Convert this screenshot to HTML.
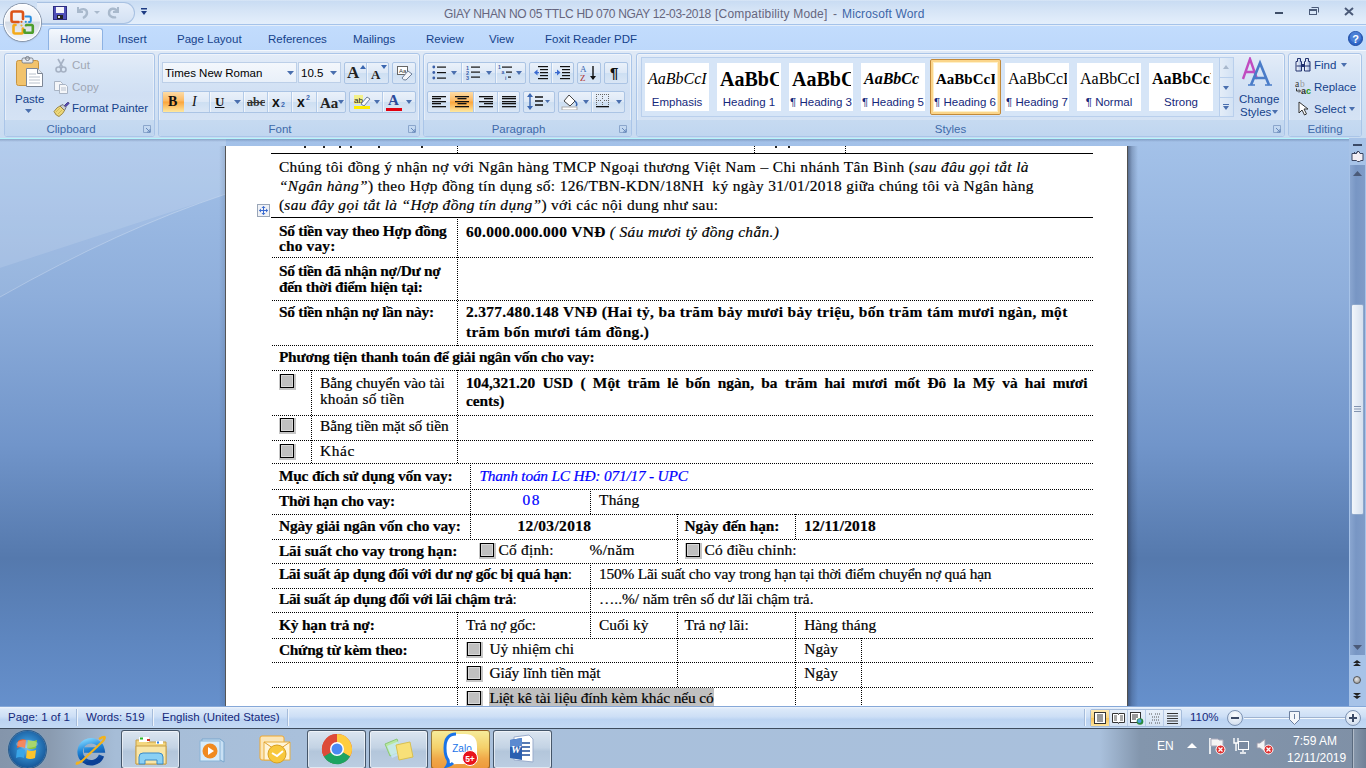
<!DOCTYPE html>
<html><head><meta charset="utf-8">
<style>
*{margin:0;padding:0;box-sizing:border-box}
html,body{width:1366px;height:768px;overflow:hidden;background:#fff}
body{position:relative;font-family:"Liberation Sans",sans-serif;font-size:11.5px;color:#15428b}
.a{position:absolute}
.nw{white-space:nowrap}
/* title bar */
#title{left:0;top:0;width:1366px;height:25px;background:linear-gradient(#e0ebf8 0px,#c9dcf3 1px,#d5e4f6 10px,#e3eefb 23px);border-bottom:1px solid #a5c3ea}
#tabs{left:0;top:25px;width:1366px;height:25px;background:linear-gradient(#c2dcfd,#bdd8fb);border-top:1px solid #e4eefa}
#ribbon{left:0;top:50px;width:1366px;height:88px;background:linear-gradient(#dfe9f6,#d3e2f4 50%,#c8dbf1);border-top:1px solid #f2f7fd}
.grp{position:absolute;top:2px;height:84px;border:1px solid #aac5e8;box-shadow:inset 0 0 0 1px rgba(255,255,255,.45);border-radius:3px;background:linear-gradient(#e3ecf8 0%,#d6e4f5 28%,#d0dff3 50%,#d8e5f5 100%)}
.glab{position:absolute;left:0;right:0;bottom:0;height:16px;background:linear-gradient(#c6daf1,#c0d6f0);color:#3e6aaa;text-align:center;line-height:18px;border-radius:0 0 2px 2px}
.bg{position:absolute;border:1px solid #abc4e4;border-radius:2px;background:linear-gradient(#eaf1fa,#dde8f6 50%,#cddff2 51%,#dae6f5)}
.dv{position:absolute;width:1px;background:#b3cbe9;box-shadow:1px 0 0 rgba(255,255,255,.6)}
.hl{position:absolute;background:linear-gradient(#fddca6,#fcb860 45%,#fba53c 50%,#fde8a0)}
.dh{position:absolute;height:1px;background:repeating-linear-gradient(90deg,#000 0 1px,transparent 1px 2px)}
.dvv{position:absolute;width:1px;background:repeating-linear-gradient(180deg,#000 0 1px,transparent 1px 2px)}
.cb{position:absolute;width:17px;height:16px;background:#c6c6c6}
.cb::after{content:"";position:absolute;left:1px;top:0;width:12px;height:12px;border:1px solid #000;background:#c0c0c0;box-shadow:inset 0 0 0 1px #d8d8d8}
#doc{left:0;top:138px;width:1349px;height:568px;background:linear-gradient(#a4c2e9 0%,#8eaedb 28%,#7195ca 54%,#5579ad 74%,#5e86bf 88%,#6690cc 100%);overflow:hidden}
#page{left:226px;top:8px;width:901px;height:600px;background:#fff}
#vscroll{left:1349px;top:138px;width:17px;height:568px;background:#a7c3e8}
#status{left:0;top:706px;width:1366px;height:22px;background:linear-gradient(#eef4fc 0px,#dce9f9 2px,#cddff6 45%,#bcd4f2 60%,#c3d9f4 100%);border-top:1px solid #86a8d8}
#taskbar{left:0;top:728px;width:1366px;height:40px;background:linear-gradient(90deg,#8495ab 0px,#8a9bb0 50px,#a6bdd7 115px,#a9c0db 300px,#a9c0dc 1100px,#8396ad 1140px,#7f90a6 1366px);border-top:1px solid #3e4c5e}
</style></head><body>
<div id="title" class="a">
  <div class="a" style="left:37px;top:2px;width:98px;height:22px;border:1px solid #a8c1e2;border-left:none;border-radius:0 11px 11px 0;background:linear-gradient(#e6eefa,#d3e1f3)"></div>
  <svg class="a" style="left:52px;top:5px" width="16" height="16" viewBox="0 0 16 16"><rect x="1" y="1" width="14" height="14" rx="1" fill="#4f4fb8"/><rect x="1.5" y="1.5" width="13" height="13" fill="none" stroke="#2c2c80"/><rect x="4" y="2" width="8" height="6" fill="#f4f4fa"/><rect x="5" y="10" width="6" height="4" fill="#222"/><rect x="6" y="11" width="2" height="2" fill="#ddd"/></svg>
  <svg class="a" style="left:75px;top:5px" width="14" height="14" viewBox="0 0 14 14"><path d="M3 2 v5 h5" fill="none" stroke="#a9b9cc" stroke-width="2"/><path d="M3 7 C6 3 12 3 12 8 C12 11 10 12 8 13" fill="none" stroke="#a9b9cc" stroke-width="2.4"/></svg>
  <svg class="a" style="left:94px;top:11px" width="6" height="4"><path d="M0 0h6l-3 3z" fill="#a9b9cc"/></svg>
  <svg class="a" style="left:107px;top:5px" width="14" height="14" viewBox="0 0 14 14"><path d="M11 2 v5 h-5" fill="none" stroke="#a9b9cc" stroke-width="2"/><path d="M11 7 C8 2 2 3 2 8 C2 12 7 13 9 12" fill="none" stroke="#a9b9cc" stroke-width="2.4"/></svg>
  <svg class="a" style="left:141px;top:8px" width="6" height="8"><rect x="0" y="0" width="6" height="1.5" fill="#1d3b83"/><path d="M0 3h6l-3 4z" fill="#1d3b83"/></svg>
  <div class="a nw" style="left:444px;top:6px;font-size:12px;line-height:16px;color:#66667e;letter-spacing:-0.33px">GIAY NHAN NO 05 TTLC HD 070 NGAY 12-03-2018</div>
  <div class="a nw" style="left:715px;top:6px;font-size:12px;line-height:16px;color:#66667e;letter-spacing:0.19px">[Compatibility Mode]</div>
  <div class="a nw" style="left:833px;top:6px;font-size:12px;line-height:16px;color:#66667e">-</div>
  <div class="a nw" style="left:842px;top:6px;font-size:12px;line-height:16px;color:#3d66a8;letter-spacing:0.15px">Microsoft Word</div>
  <div class="a" style="left:1275px;top:12px;width:8px;height:2px;background:#3e4e68"></div>
  <svg class="a" style="left:1309px;top:7px" width="10" height="8"><rect x="0.5" y="2.5" width="7" height="5" fill="none" stroke="#4a5a78"/><rect x="0" y="2" width="8" height="2" fill="#4a5a78"/><path d="M2.5 0.5h7v5" fill="none" stroke="#4a5a78"/></svg>
  <svg class="a" style="left:1344px;top:7px" width="10" height="9"><path d="M1 1L9 8M9 1L1 8" stroke="#4a5a78" stroke-width="2"/></svg>
</div>
<div class="a" style="z-index:10;left:4px;top:4px;width:37px;height:37px;border-radius:50%;background:linear-gradient(#fdfdfe 0%,#eef1f6 45%,#d3dbe6 50%,#e4e9f0 75%,#f6f8fb 100%);box-shadow:0 0 0 1px #8a98ac,inset 0 0 0 1px #fff,0 1px 2px rgba(0,0,0,.25)">
  <svg class="a" style="left:0;top:0" width="37" height="37" viewBox="4 4 37 37"><g fill="none" stroke-linecap="round"><path d="M23 19V13.5Q23 11.5 21 11.5H13.5Q11.5 11.5 11.5 13.5V20Q11.5 22 13.5 22H18.5" stroke="#dc5418" stroke-width="2.6"/><path d="M25.5 16.5H29.5Q30.8 16.5 30.8 17.8V20.8Q30.8 22 29.5 22H29" stroke="#2b8ee0" stroke-width="2"/><path d="M15.5 25H14.8Q13.5 25 13.5 26.3V32Q13.5 33.5 15 33.5H21.5Q22.8 33.5 22.8 32V28.5" stroke="#f4aa1a" stroke-width="2.6"/><path d="M26.5 25H31.5Q32.8 25 32.8 26.3V31.5Q32.8 32.8 31.5 32.8H25.8Q24.5 32.8 24.5 31.5V30" stroke="#4e9e2c" stroke-width="2.6"/></g><circle cx="21.5" cy="21.8" r="1.1" fill="#e0601a"/><circle cx="25.8" cy="21.8" r="1.1" fill="#2b8ee0"/><circle cx="21.5" cy="25.5" r="1.1" fill="#f4b030"/><circle cx="25.8" cy="25.5" r="1.1" fill="#4e9e2c"/></svg>
</div>
<div id="tabs" class="a">
  <div class="a" style="left:48px;top:2px;width:55px;height:24px;border:1px solid #8db2e3;border-bottom:none;border-radius:3px 3px 0 0;background:linear-gradient(#f4f8fd,#e4ecf7 60%,#dfe8f5)"></div>
  <div class="a nw" style="left:60px;top:6px;line-height:14px">Home</div>
  <div class="a nw" style="left:118px;top:6px;line-height:14px">Insert</div>
  <div class="a nw" style="left:177px;top:6px;line-height:14px">Page Layout</div>
  <div class="a nw" style="left:268px;top:6px;line-height:14px">References</div>
  <div class="a nw" style="left:353px;top:6px;line-height:14px">Mailings</div>
  <div class="a nw" style="left:426px;top:6px;line-height:14px">Review</div>
  <div class="a nw" style="left:489px;top:6px;line-height:14px">View</div>
  <div class="a nw" style="left:545px;top:6px;line-height:14px">Foxit Reader PDF</div>
  <svg class="a" style="left:1348px;top:5px" width="15" height="15" viewBox="0 0 15 15"><circle cx="7.5" cy="7.5" r="7" fill="#2f66c8" stroke="#1d4aa0"/><circle cx="7.5" cy="6" r="5.5" fill="#5d8fe0" opacity=".6"/><text x="7.5" y="11.5" font-family="Liberation Sans" font-weight="bold" font-size="11" text-anchor="middle" fill="#fff">?</text></svg>
</div>
<div id="ribbon" class="a">
  <div class="grp" style="left:4px;width:151px"><div class="glab" style="padding-right:17px">Clipboard</div></div>
  <div class="grp" style="left:158px;width:262px"><div class="glab" style="padding-right:18px">Font</div></div>
  <div class="grp" style="left:423px;width:209px"><div class="glab" style="padding-right:18px">Paragraph</div></div>
  <div class="grp" style="left:636px;width:649px"><div class="glab" style="padding-right:20px">Styles</div></div>
  <div class="grp" style="left:1288px;width:74px"><div class="glab">Editing</div></div>
</div>
<!-- RIBBON ITEMS -->
<div class="a" style="left:0;top:0;width:1366px;height:138px;z-index:5">
<!-- Clipboard -->
<svg class="a" style="left:15px;top:56px" width="30" height="32" viewBox="0 0 30 32"><rect x="1.5" y="4.5" width="22" height="25" rx="2" fill="#f2c36c" stroke="#c89440"/><rect x="7" y="2" width="11" height="5" rx="1.5" fill="#e4e8ee" stroke="#7a808a"/><circle cx="12.5" cy="2.5" r="2" fill="none" stroke="#7a808a"/><path d="M11.5 12.5h11l5 5v13h-16z" fill="#fff" stroke="#7d8796"/><path d="M22.5 12.5v5h5" fill="#e6eaf0" stroke="#7d8796"/><path d="M14 18h7M14 21h11M14 24h11M14 27h11" stroke="#b9c1cc"/></svg>
<div class="a nw" style="left:15px;top:92px;line-height:14px">Paste</div>
<svg class="a" style="left:25px;top:109px" width="7" height="4"><path d="M0 0h7l-3.5 4z" fill="#4a6fae"/></svg>
<svg class="a" style="left:55px;top:58px" width="12" height="15" viewBox="0 0 12 15"><path d="M3 1l4.5 8M9 1L4.5 9" stroke="#a6b2c4" stroke-width="1.6"/><circle cx="3.5" cy="11.5" r="2.5" fill="none" stroke="#a6b2c4" stroke-width="1.6"/><circle cx="8.5" cy="11.5" r="2.5" fill="none" stroke="#a6b2c4" stroke-width="1.6"/></svg>
<div class="a nw" style="left:72px;top:58px;line-height:14px;color:#a0a7b4">Cut</div>
<svg class="a" style="left:53px;top:80px" width="16" height="14" viewBox="0 0 16 14"><path d="M1.5 1.5h6l2 2v7h-8z" fill="#f4f6f9" stroke="#a9b4c4"/><path d="M6.5 4.5h6l2 2v7h-8z" fill="#f4f6f9" stroke="#a9b4c4"/><path d="M8 8h5M8 10h5" stroke="#b9c2d0"/></svg>
<div class="a nw" style="left:72px;top:80px;line-height:14px;color:#a0a7b4">Copy</div>
<svg class="a" style="left:53px;top:101px" width="17" height="16" viewBox="0 0 17 16"><path d="M10.5 5.5 L14.5 1.5 Q16 1 16 2.5 L12 6.5z" fill="#5a4ab8" stroke="#2e2670" stroke-width=".8"/><path d="M7 5 L10 3.5 L13 6.5 L11.5 9.5z" fill="#c8ccd4" stroke="#5a5e68" stroke-width=".8"/><path d="M1 10.5 Q4 6 7 5 L11.5 9.5 Q10.5 12.5 6 15.5 Q3 15 1 10.5z" fill="#ecd77a" stroke="#8a7430" stroke-width=".8"/><path d="M3 11l4-4M5 13l4-4" stroke="#c9ae48" stroke-width=".7"/></svg>
<div class="a nw" style="left:72px;top:101px;line-height:14px">Format Painter</div>
<svg class="a" style="left:143px;top:125px" width="8" height="8"><path d="M0.5 0.5h7v7h-7z" fill="none" stroke="#8ba6cc"/><path d="M3 3l4 4M7 4v3h-3" stroke="#6688bb" fill="none"/></svg>
<!-- Font -->
<div class="a" style="left:162px;top:62px;width:135px;height:21px;border:1px solid #bccfe8;background:linear-gradient(#f3f7fc,#e9f0f9)"></div>
<div class="a nw" style="left:165px;top:66px;line-height:14px;color:#000">Times New Roman</div>
<svg class="a" style="left:287px;top:71px" width="7" height="4"><path d="M0 0h7l-3.5 4z" fill="#4a6fae"/></svg>
<div class="a" style="left:298px;top:62px;width:43px;height:21px;border:1px solid #bccfe8;background:linear-gradient(#f3f7fc,#e9f0f9)"></div>
<div class="a nw" style="left:301px;top:66px;line-height:14px;color:#000">10.5</div>
<svg class="a" style="left:330px;top:71px" width="7" height="4"><path d="M0 0h7l-3.5 4z" fill="#4a6fae"/></svg>
<div class="a bg" style="left:344px;top:62px;width:45px;height:22px"></div>
<div class="a dv" style="left:366px;top:63px;height:20px"></div>
<div class="a nw" style="left:347px;top:63px;font:bold 17px 'Liberation Serif';line-height:20px;color:#222">A</div>
<svg class="a" style="left:360px;top:65px" width="6" height="4"><path d="M0 4h6l-3-4z" fill="#3a66b0"/></svg>
<div class="a nw" style="left:371px;top:67px;font:bold 13px 'Liberation Serif';line-height:16px;color:#222">A</div>
<svg class="a" style="left:381px;top:65px" width="6" height="4"><path d="M0 0h6l-3 4z" fill="#3a66b0"/></svg>
<div class="a bg" style="left:392px;top:62px;width:24px;height:22px"></div>
<svg class="a" style="left:396px;top:65px" width="17" height="16" viewBox="0 0 17 16"><rect x="1.5" y="1.5" width="10" height="8" fill="#fff" stroke="#666"/><text x="3" y="8" font-family="Liberation Sans" font-size="6" fill="#333">Aa</text><path d="M6 13 L12 6 L16 9 L10 15 Q7 15.5 6 13z" fill="#f4f6fb" stroke="#6d7f9a"/></svg>
<div class="a bg" style="left:162px;top:91px;width:184px;height:22px"></div>
<div class="a hl" style="left:163px;top:92px;width:21px;height:20px"></div>
<div class="a dv" style="left:209px;top:92px;height:20px"></div>
<div class="a dv" style="left:243px;top:92px;height:20px"></div>
<div class="a dv" style="left:267px;top:92px;height:20px"></div>
<div class="a dv" style="left:291px;top:92px;height:20px"></div>
<div class="a dv" style="left:316px;top:92px;height:20px"></div>
<div class="a nw" style="left:168px;top:93px;font:bold 14px 'Liberation Serif';line-height:18px;color:#111">B</div>
<div class="a nw" style="left:192px;top:93px;font:italic 14px 'Liberation Serif';line-height:18px;color:#111">I</div>
<div class="a nw" style="left:215px;top:93px;font:bold 13px 'Liberation Serif';line-height:18px;color:#111;text-decoration:underline">U</div>
<svg class="a" style="left:234px;top:100px" width="7" height="4"><path d="M0 0h7l-3.5 4z" fill="#4a6fae"/></svg>
<div class="a nw" style="left:247px;top:94px;font:bold 12px 'Liberation Serif';line-height:16px;color:#333;text-decoration:line-through">abc</div>
<div class="a nw" style="left:272px;top:93px;font:bold 14px 'Liberation Sans';line-height:18px;color:#111">x</div>
<div class="a nw" style="left:281px;top:101px;font:bold 7px 'Liberation Sans';line-height:8px;color:#3a66b0">2</div>
<div class="a nw" style="left:297px;top:93px;font:bold 14px 'Liberation Sans';line-height:18px;color:#111">x</div>
<div class="a nw" style="left:306px;top:94px;font:bold 7px 'Liberation Sans';line-height:8px;color:#3a66b0">2</div>
<div class="a nw" style="left:320px;top:94px;font:bold 15px 'Liberation Serif';line-height:18px;color:#222">Aa</div>
<svg class="a" style="left:338px;top:100px" width="6" height="4"><path d="M0 0h6l-3 4z" fill="#4a6fae"/></svg>
<div class="a bg" style="left:349px;top:91px;width:67px;height:22px"></div>
<div class="a dv" style="left:382px;top:92px;height:20px"></div>
<svg class="a" style="left:353px;top:93px" width="18" height="17" viewBox="0 0 18 17"><rect x="1" y="2" width="9" height="9" fill="#f3f08a"/><text x="1" y="10" font-family="Liberation Sans" font-size="8" fill="#222">ab</text><path d="M8 11 L14 4 L17 6 L11 13z" fill="#f8fafc" stroke="#6d7f9a"/><rect x="1" y="13" width="16" height="3" fill="#ffec00"/></svg>
<svg class="a" style="left:374px;top:100px" width="6" height="4"><path d="M0 0h6l-3 4z" fill="#4a6fae"/></svg>
<div class="a nw" style="left:388px;top:92px;font:bold 15px 'Liberation Serif';line-height:16px;color:#2a4a9a">A</div>
<div class="a" style="left:386px;top:108px;width:16px;height:3px;background:#e00010"></div>
<svg class="a" style="left:406px;top:100px" width="6" height="4"><path d="M0 0h6l-3 4z" fill="#4a6fae"/></svg>
<svg class="a" style="left:408px;top:125px" width="8" height="8"><path d="M0.5 0.5h7v7h-7z" fill="none" stroke="#8ba6cc"/><path d="M3 3l4 4M7 4v3h-3" stroke="#6688bb" fill="none"/></svg>
<!-- Paragraph -->
<div class="a bg" style="left:427px;top:62px;width:99px;height:22px"></div>
<div class="a dv" style="left:461px;top:63px;height:20px"></div>
<div class="a dv" style="left:495px;top:63px;height:20px"></div>
<svg class="a" style="left:432px;top:65px" width="16" height="15" viewBox="0 0 16 15"><circle cx="1.8" cy="2" r="1.4" fill="#3a5fa8"/><circle cx="1.8" cy="7.5" r="1.4" fill="#3a5fa8"/><circle cx="1.8" cy="13" r="1.4" fill="#3a5fa8"/><rect x="5" y="1.5" width="9" height="1.2" fill="#111"/><rect x="5" y="7" width="9" height="1.2" fill="#111"/><rect x="5" y="12.5" width="9" height="1.2" fill="#111"/></svg>
<svg class="a" style="left:451px;top:71px" width="6" height="4"><path d="M0 0h6l-3 4z" fill="#4a6fae"/></svg>
<svg class="a" style="left:466px;top:64px" width="16" height="16" viewBox="0 0 16 16"><text x="0" y="5.5" font-family="Liberation Sans" font-weight="bold" font-size="5.5" fill="#3a5fa8">1</text><text x="0" y="10.5" font-family="Liberation Sans" font-weight="bold" font-size="5.5" fill="#3a5fa8">2</text><text x="0" y="15.5" font-family="Liberation Sans" font-weight="bold" font-size="5.5" fill="#3a5fa8">3</text><rect x="5" y="2.5" width="9" height="1.2" fill="#111"/><rect x="5" y="7.5" width="9" height="1.2" fill="#111"/><rect x="5" y="12.5" width="9" height="1.2" fill="#111"/></svg>
<svg class="a" style="left:486px;top:71px" width="6" height="4"><path d="M0 0h6l-3 4z" fill="#4a6fae"/></svg>
<svg class="a" style="left:498px;top:64px" width="16" height="16" viewBox="0 0 16 16"><text x="0" y="5" font-family="Liberation Sans" font-weight="bold" font-size="5" fill="#3a5fa8">1</text><text x="3.5" y="10" font-family="Liberation Sans" font-weight="bold" font-size="5" fill="#3a5fa8">a</text><text x="7" y="15.5" font-family="Liberation Sans" font-weight="bold" font-size="5" fill="#3a5fa8">i</text><rect x="4" y="2.5" width="10" height="1.2" fill="#111"/><rect x="8" y="7.5" width="6" height="1.2" fill="#111"/><rect x="10" y="12.5" width="3" height="1.2" fill="#111"/></svg>
<svg class="a" style="left:516px;top:71px" width="6" height="4"><path d="M0 0h6l-3 4z" fill="#4a6fae"/></svg>
<div class="a bg" style="left:529px;top:62px;width:45px;height:22px"></div>
<div class="a dv" style="left:551px;top:63px;height:20px"></div>
<svg class="a" style="left:533px;top:65px" width="16" height="15" viewBox="0 0 16 15"><rect x="5" y="1" width="10" height="1.2" fill="#111"/><rect x="7" y="4" width="8" height="1.2" fill="#111"/><rect x="7" y="7" width="8" height="1.2" fill="#111"/><rect x="7" y="10" width="8" height="1.2" fill="#111"/><rect x="5" y="13" width="10" height="1.2" fill="#111"/><path d="M1 7.5l3.5-3v6z" fill="#3a6ad0"/><rect x="3" y="7" width="3" height="1.2" fill="#3a6ad0"/></svg>
<svg class="a" style="left:555px;top:65px" width="16" height="15" viewBox="0 0 16 15"><rect x="5" y="1" width="10" height="1.2" fill="#111"/><rect x="7" y="4" width="8" height="1.2" fill="#111"/><rect x="7" y="7" width="8" height="1.2" fill="#111"/><rect x="7" y="10" width="8" height="1.2" fill="#111"/><rect x="5" y="13" width="10" height="1.2" fill="#111"/><path d="M5.5 7.5l-3.5-3v6z" fill="#3a6ad0"/><rect x="0" y="7" width="3" height="1.2" fill="#3a6ad0"/></svg>
<div class="a bg" style="left:577px;top:62px;width:24px;height:22px"></div>
<svg class="a" style="left:580px;top:64px" width="18" height="18" viewBox="0 0 18 18"><text x="0" y="8" font-family="Liberation Serif" font-size="9" fill="#3a66b0">A</text><text x="0" y="17" font-family="Liberation Serif" font-size="9" fill="#b03030">Z</text><path d="M13 2v13" stroke="#111" stroke-width="1.4"/><path d="M10 12l3 4 3-4z" fill="#111"/></svg>
<div class="a bg" style="left:604px;top:62px;width:24px;height:22px"></div>
<div class="a nw" style="left:610px;top:64px;font:bold 15px 'Liberation Sans';line-height:18px;color:#111">¶</div>
<div class="a bg" style="left:427px;top:91px;width:93px;height:22px"></div>
<div class="a hl" style="left:450px;top:92px;width:23px;height:20px"></div>
<div class="a dv" style="left:473px;top:92px;height:20px"></div>
<div class="a dv" style="left:497px;top:92px;height:20px"></div>
<svg class="a" style="left:432px;top:96px" width="15" height="12"><rect x="0" y="0" width="14" height="1.3" fill="#111"/><rect x="0" y="2" width="9" height="1.3" fill="#111"/><rect x="0" y="5" width="14" height="1.3" fill="#111"/><rect x="0" y="7" width="9" height="1.3" fill="#111"/><rect x="0" y="10" width="14" height="1.3" fill="#111"/></svg>
<svg class="a" style="left:455px;top:96px" width="15" height="12"><rect x="0" y="0" width="14" height="1.3" fill="#111"/><rect x="2.5" y="2" width="9" height="1.3" fill="#111"/><rect x="0" y="5" width="14" height="1.3" fill="#111"/><rect x="2.5" y="7" width="9" height="1.3" fill="#111"/><rect x="0" y="10" width="14" height="1.3" fill="#111"/></svg>
<svg class="a" style="left:479px;top:96px" width="15" height="12"><rect x="0" y="0" width="14" height="1.3" fill="#111"/><rect x="5" y="2" width="9" height="1.3" fill="#111"/><rect x="0" y="5" width="14" height="1.3" fill="#111"/><rect x="5" y="7" width="9" height="1.3" fill="#111"/><rect x="0" y="10" width="14" height="1.3" fill="#111"/></svg>
<svg class="a" style="left:502px;top:96px" width="15" height="12"><rect x="0" y="0" width="14" height="1.3" fill="#111"/><rect x="0" y="2" width="14" height="1.3" fill="#111"/><rect x="0" y="5" width="14" height="1.3" fill="#111"/><rect x="0" y="7" width="14" height="1.3" fill="#111"/><rect x="0" y="10" width="14" height="1.3" fill="#111"/></svg>
<div class="a bg" style="left:523px;top:91px;width:32px;height:22px"></div>
<svg class="a" style="left:527px;top:93px" width="24" height="17" viewBox="0 0 24 17"><path d="M3 2v13" stroke="#3a66b0" stroke-width="1.4"/><path d="M0 4l3-4 3 4zM0 13l3 4 3-4z" fill="#3a66b0"/><path d="M8 4h8M8 8h8M8 12h8" stroke="#111" stroke-width="1.3"/><path d="M18 7h5l-2.5 3z" fill="#4a6fae"/></svg>
<div class="a bg" style="left:558px;top:91px;width:67px;height:22px"></div>
<div class="a dv" style="left:591px;top:92px;height:20px"></div>
<svg class="a" style="left:561px;top:93px" width="18" height="17" viewBox="0 0 18 17"><path d="M3 8 L8 2 L14 8 L9 13z" fill="#fff" stroke="#444"/><path d="M14 8 q3 3 1 5" fill="none" stroke="#3a66b0" stroke-width="1.5"/><rect x="1" y="14" width="15" height="3" fill="#fff" stroke="#aaa"/></svg>
<svg class="a" style="left:583px;top:100px" width="6" height="4"><path d="M0 0h6l-3 4z" fill="#4a6fae"/></svg>
<svg class="a" style="left:596px;top:94px" width="14" height="14" viewBox="0 0 14 14"><g fill="#666"><rect x="0" y="0" width="1" height="1"/><rect x="2" y="0" width="1" height="1"/><rect x="4" y="0" width="1" height="1"/><rect x="6" y="0" width="1" height="1"/><rect x="8" y="0" width="1" height="1"/><rect x="10" y="0" width="1" height="1"/><rect x="12" y="0" width="1" height="1"/><rect x="0" y="2" width="1" height="1"/><rect x="0" y="4" width="1" height="1"/><rect x="0" y="6" width="1" height="1"/><rect x="0" y="8" width="1" height="1"/><rect x="0" y="10" width="1" height="1"/><rect x="12" y="2" width="1" height="1"/><rect x="12" y="4" width="1" height="1"/><rect x="12" y="6" width="1" height="1"/><rect x="12" y="8" width="1" height="1"/><rect x="12" y="10" width="1" height="1"/><rect x="6" y="2" width="1" height="1"/><rect x="6" y="4" width="1" height="1"/><rect x="6" y="8" width="1" height="1"/><rect x="6" y="10" width="1" height="1"/><rect x="2" y="6" width="1" height="1"/><rect x="4" y="6" width="1" height="1"/><rect x="8" y="6" width="1" height="1"/><rect x="10" y="6" width="1" height="1"/></g><rect x="0" y="12" width="13" height="1.3" fill="#111"/></svg>
<svg class="a" style="left:616px;top:100px" width="6" height="4"><path d="M0 0h6l-3 4z" fill="#4a6fae"/></svg>
<svg class="a" style="left:619px;top:125px" width="8" height="8"><path d="M0.5 0.5h7v7h-7z" fill="none" stroke="#8ba6cc"/><path d="M3 3l4 4M7 4v3h-3" stroke="#6688bb" fill="none"/></svg>
<!-- Styles -->
<div class="a" style="left:641px;top:57px;width:593px;height:60px;border:1px solid #b9cfec;background:#d6e5f7"></div>
<div class="a" style="left:645px;top:63px;width:64px;height:48px;background:#fff"></div>
<div class="a nw" style="left:645px;top:68px;width:62px;height:24px;overflow:hidden;padding-left:3px;font:italic 16px 'Liberation Serif';line-height:22px;color:#000">AaBbCcI</div>
<div class="a nw" style="left:645px;top:95px;width:64px;text-align:center;line-height:14px;color:#15287b">Emphasis</div>
<div class="a" style="left:717px;top:63px;width:64px;height:48px;background:#fff"></div>
<div class="a nw" style="left:717px;top:68px;width:62px;height:24px;overflow:hidden;padding-left:3px;font:bold 20px 'Liberation Serif';line-height:22px;color:#000">AaBbC</div>
<div class="a nw" style="left:717px;top:95px;width:64px;text-align:center;line-height:14px;color:#15287b">Heading 1</div>
<div class="a" style="left:789px;top:63px;width:64px;height:48px;background:#fff"></div>
<div class="a nw" style="left:789px;top:68px;width:62px;height:24px;overflow:hidden;padding-left:3px;font:bold 20px 'Liberation Serif';line-height:22px;color:#000">AaBbC</div>
<div class="a nw" style="left:789px;top:95px;width:64px;text-align:center;line-height:14px;color:#15287b">¶ Heading 3</div>
<div class="a" style="left:861px;top:63px;width:64px;height:48px;background:#fff"></div>
<div class="a nw" style="left:861px;top:68px;width:62px;height:24px;overflow:hidden;padding-left:3px;font:bold italic 16px 'Liberation Serif';line-height:22px;color:#000">AaBbCc</div>
<div class="a nw" style="left:861px;top:95px;width:64px;text-align:center;line-height:14px;color:#15287b">¶ Heading 5</div>
<div class="a" style="left:930px;top:59px;width:71px;height:56px;border:1px solid #c2893a;border-radius:2px;background:#fff;box-shadow:inset 0 0 0 2px #fbd58a,inset 0 0 0 3px #fef0c8"></div>
<div class="a nw" style="left:933px;top:68px;width:62px;height:24px;overflow:hidden;padding-left:3px;font:bold 15px 'Liberation Serif';line-height:22px;color:#000">AaBbCcI</div>
<div class="a nw" style="left:933px;top:95px;width:64px;text-align:center;line-height:14px;color:#15287b">¶ Heading 6</div>
<div class="a" style="left:1005px;top:63px;width:64px;height:48px;background:#fff"></div>
<div class="a nw" style="left:1005px;top:68px;width:62px;height:24px;overflow:hidden;padding-left:3px;font:16px 'Liberation Serif';line-height:22px;color:#000">AaBbCcI</div>
<div class="a nw" style="left:1005px;top:95px;width:64px;text-align:center;line-height:14px;color:#15287b">¶ Heading 7</div>
<div class="a" style="left:1077px;top:63px;width:64px;height:48px;background:#fff"></div>
<div class="a nw" style="left:1077px;top:68px;width:62px;height:24px;overflow:hidden;padding-left:3px;font:16px 'Liberation Serif';line-height:22px;color:#000">AaBbCcI</div>
<div class="a nw" style="left:1077px;top:95px;width:64px;text-align:center;line-height:14px;color:#15287b">¶ Normal</div>
<div class="a" style="left:1149px;top:63px;width:64px;height:48px;background:#fff"></div>
<div class="a nw" style="left:1149px;top:68px;width:62px;height:24px;overflow:hidden;padding-left:3px;font:bold 16px 'Liberation Serif';line-height:22px;color:#000">AaBbCcI</div>
<div class="a nw" style="left:1149px;top:95px;width:64px;text-align:center;line-height:14px;color:#15287b">Strong</div>
<div class="a" style="left:1219px;top:57px;width:15px;height:60px;border:1px solid #b9cfec;background:linear-gradient(90deg,#e4edf8,#d3e2f4)"></div>
<div class="a" style="left:1219px;top:77px;width:15px;height:1px;background:#b9cfec"></div>
<div class="a" style="left:1219px;top:97px;width:15px;height:1px;background:#b9cfec"></div>
<svg class="a" style="left:1223px;top:65px" width="6" height="4"><path d="M0 4h6l-3-4z" fill="#a8b8cc"/></svg>
<svg class="a" style="left:1223px;top:86px" width="6" height="4"><path d="M0 0h6l-3 4z" fill="#4a6fae"/></svg>
<svg class="a" style="left:1223px;top:104px" width="6" height="6"><rect x="0" y="0" width="6" height="1" fill="#4a6fae"/><path d="M0 2h6l-3 4z" fill="#4a6fae"/></svg>
<svg class="a" style="left:1241px;top:57px" width="34" height="30" viewBox="0 0 34 30"><path d="M2 22 L9 2 L16 22 M4.5 15h9" fill="none" stroke="#c04cc0" stroke-width="2.4"/><path d="M10 28 L19 6 L28 28 M13 21h12" fill="none" stroke="#4a7cc8" stroke-width="2.6"/><path d="M7 28h7M24 28h7" stroke="#4a7cc8" stroke-width="1.5"/></svg>
<div class="a nw" style="left:1239px;top:92px;line-height:14px">Change</div>
<div class="a nw" style="left:1240px;top:105px;line-height:14px">Styles</div>
<svg class="a" style="left:1272px;top:110px" width="6" height="4"><path d="M0 0h6l-3 4z" fill="#4a6fae"/></svg>
<svg class="a" style="left:1273px;top:125px" width="8" height="8"><path d="M0.5 0.5h7v7h-7z" fill="none" stroke="#8ba6cc"/><path d="M3 3l4 4M7 4v3h-3" stroke="#6688bb" fill="none"/></svg>
<!-- Editing -->
<svg class="a" style="left:1295px;top:57px" width="16" height="15" viewBox="0 0 16 15"><defs><linearGradient id="bn" x1="0" x2="1"><stop offset="0" stop-color="#fff"/><stop offset="1" stop-color="#9fb4dc"/></linearGradient></defs><path d="M2.5 1.5h3v3h1v9.5h-5.5v-9.5h1.5z" fill="url(#bn)" stroke="#22326e"/><path d="M10.5 1.5h3v3h1.5v9.5h-5.5v-9.5h1z" fill="url(#bn)" stroke="#22326e"/><rect x="6" y="7" width="4" height="3" fill="#22326e"/><path d="M1.5 9h5M10 9h5" stroke="#22326e"/></svg>
<div class="a nw" style="left:1314px;top:58px;line-height:14px">Find</div>
<svg class="a" style="left:1341px;top:63px" width="6" height="4"><path d="M0 0h6l-3 4z" fill="#4a6fae"/></svg>
<svg class="a" style="left:1295px;top:79px" width="17" height="16" viewBox="0 0 17 16"><text x="0" y="8" font-family="Liberation Serif" font-size="9.5" fill="#333">a</text><text x="5" y="8" font-family="Liberation Serif" font-size="9.5" fill="#999">b</text><text x="6" y="15" font-family="Liberation Sans" font-weight="bold" font-size="9" fill="#333">a</text><text x="11" y="15" font-family="Liberation Sans" font-weight="bold" font-size="9" fill="#2a9a20">c</text><path d="M1.5 9.5v2.5h3" fill="none" stroke="#333"/><path d="M4 10.5l1.5 1.5-1.5 1.5" fill="none" stroke="#333"/></svg>
<div class="a nw" style="left:1314px;top:80px;line-height:14px">Replace</div>
<svg class="a" style="left:1298px;top:101px" width="11" height="15" viewBox="0 0 11 15"><path d="M1 1v11l3-3 2.5 5 2-1-2.5-5h4z" fill="#fff" stroke="#333"/></svg>
<div class="a nw" style="left:1314px;top:102px;line-height:14px">Select</div>
<svg class="a" style="left:1349px;top:107px" width="6" height="4"><path d="M0 0h6l-3 4z" fill="#4a6fae"/></svg>
</div>

<div id="doc" class="a">
  <svg class="a" style="left:0;top:0" width="226" height="200" viewBox="0 0 226 200"><path d="M0 0H226V56L0 130Z" fill="rgba(255,255,255,0.18)"/><path d="M0 130L226 56Q120 91 0 159Z" fill="rgba(255,255,255,0.08)"/><path d="M0 159Q120 91 226 56" fill="none" stroke="rgba(255,255,255,0.25)"/></svg>
  <div class="a" style="left:0;top:0;width:1349px;height:1px;background:#b4f6fc"></div>
  <div class="a" style="left:0;top:1px;width:1349px;height:3px;background:linear-gradient(rgba(70,90,130,.35),rgba(70,90,130,0))"></div>
</div>
<!--DOC-->
<div class="a" style="left:226px;top:146px;width:901px;height:560px;overflow:hidden;background:#fff">
<div class="a" style="left:45px;top:7px;width:822px;height:1px;background:#000"></div>
<div class="a" style="left:45px;top:71px;width:822px;height:1px;background:#000"></div>
<div class="a dh" style="left:46px;top:111px;width:822px"></div>
<div class="a dh" style="left:46px;top:154px;width:822px"></div>
<div class="a dh" style="left:46px;top:199px;width:822px"></div>
<div class="a dh" style="left:46px;top:224px;width:822px"></div>
<div class="a dh" style="left:46px;top:269px;width:822px"></div>
<div class="a dh" style="left:46px;top:294px;width:822px"></div>
<div class="a dh" style="left:46px;top:317px;width:822px"></div>
<div class="a dh" style="left:46px;top:343px;width:822px"></div>
<div class="a dh" style="left:46px;top:368px;width:822px"></div>
<div class="a dh" style="left:46px;top:393px;width:822px"></div>
<div class="a dh" style="left:46px;top:417px;width:822px"></div>
<div class="a dh" style="left:46px;top:442px;width:822px"></div>
<div class="a dh" style="left:46px;top:466px;width:822px"></div>
<div class="a dh" style="left:46px;top:492px;width:822px"></div>
<div class="a dh" style="left:46px;top:516px;width:822px"></div>
<div class="a dh" style="left:46px;top:541px;width:822px"></div>
<div class="a dvv" style="left:231px;top:0px;height:8px"></div>
<div class="a dvv" style="left:528px;top:0px;height:8px"></div>
<div class="a dvv" style="left:619px;top:0px;height:8px"></div>
<div class="a dvv" style="left:231px;top:71px;height:129px"></div>
<div class="a dvv" style="left:85px;top:224px;height:94px"></div>
<div class="a dvv" style="left:231px;top:224px;height:94px"></div>
<div class="a dvv" style="left:244px;top:317px;height:77px"></div>
<div class="a dvv" style="left:364px;top:343px;height:26px"></div>
<div class="a dvv" style="left:451px;top:368px;height:50px"></div>
<div class="a dvv" style="left:569px;top:368px;height:26px"></div>
<div class="a dvv" style="left:364px;top:417px;height:50px"></div>
<div class="a dvv" style="left:231px;top:466px;height:95px"></div>
<div class="a dvv" style="left:364px;top:466px;height:27px"></div>
<div class="a dvv" style="left:451px;top:466px;height:76px"></div>
<div class="a dvv" style="left:569px;top:466px;height:95px"></div>
<div class="a dvv" style="left:635px;top:492px;height:69px"></div>
<div class="a cb" style="left:53px;top:228px"></div>
<div class="a cb" style="left:53px;top:272px"></div>
<div class="a cb" style="left:53px;top:298px"></div>
<div class="a cb" style="left:253px;top:397px"></div>
<div class="a cb" style="left:459px;top:397px"></div>
<div class="a cb" style="left:240px;top:496px"></div>
<div class="a cb" style="left:240px;top:520px"></div>
<div class="a cb" style="left:240px;top:545px"></div>
<div class="a nw" style="left:52.9px;top:11.0px;font:15.4px 'Liberation Serif';line-height:20px;color:#000;-webkit-text-stroke:0.2px #000;letter-spacing:0.380px;">Chúng tôi đồng ý nhận nợ với Ngân hàng TMCP Ngoại thương Việt Nam – Chi nhánh Tân Bình (<i>sau đâu gọi tắt là</i></div>
<div class="a nw" style="left:52.9px;top:30.0px;font:15.4px 'Liberation Serif';line-height:20px;color:#000;-webkit-text-stroke:0.2px #000;letter-spacing:0.360px;"><i>“Ngân hàng”</i>) theo Hợp đồng tín dụng số: 126/TBN-KDN/18NH&nbsp; ký ngày 31/01/2018 giữa chúng tôi và Ngân hàng</div>
<div class="a nw" style="left:52.9px;top:48.5px;font:15.4px 'Liberation Serif';line-height:20px;color:#000;-webkit-text-stroke:0.2px #000;letter-spacing:0.337px;">(<i>sau đây gọi tắt là “Hợp đồng tín dụng”</i>) với các nội dung như sau:</div>
<div class="a nw" style="left:52.9px;top:74.5px;font:bold 15.4px 'Liberation Serif';line-height:20px;color:#000;-webkit-text-stroke:0.2px #000;letter-spacing:-0.223px;">Số tiền vay theo Hợp đồng</div>
<div class="a nw" style="left:52.9px;top:90.0px;font:bold 15.4px 'Liberation Serif';line-height:20px;color:#000;-webkit-text-stroke:0.2px #000;letter-spacing:0.178px;">cho vay:</div>
<div class="a nw" style="left:239.9px;top:75.5px;font:bold 15.4px 'Liberation Serif';line-height:20px;color:#000;-webkit-text-stroke:0.2px #000;letter-spacing:0.368px;">60.000.000.000 VNĐ <span style="font-weight:normal;font-style:italic">( Sáu mươi tỷ đồng chẵn.)</span></div>
<div class="a nw" style="left:52.9px;top:114.5px;font:bold 15.4px 'Liberation Serif';line-height:20px;color:#000;-webkit-text-stroke:0.2px #000;letter-spacing:-0.292px;">Số tiền đã nhận nợ/Dư nợ</div>
<div class="a nw" style="left:52.9px;top:130.5px;font:bold 15.4px 'Liberation Serif';line-height:20px;color:#000;-webkit-text-stroke:0.2px #000;letter-spacing:-0.217px;">đến thời điểm hiện tại:</div>
<div class="a nw" style="left:52.9px;top:156.0px;font:bold 15.4px 'Liberation Serif';line-height:20px;color:#000;-webkit-text-stroke:0.2px #000;letter-spacing:-0.224px;">Số tiền nhận nợ lần này:</div>
<div class="a nw" style="left:239.9px;top:156.2px;font:bold 15.4px 'Liberation Serif';line-height:20px;color:#000;-webkit-text-stroke:0.2px #000;letter-spacing:0.366px;">2.377.480.148 VNĐ (Hai tỷ, ba trăm bảy mươi bảy triệu, bốn trăm tám mươi ngàn, một</div>
<div class="a nw" style="left:239.9px;top:175.7px;font:bold 15.4px 'Liberation Serif';line-height:20px;color:#000;-webkit-text-stroke:0.2px #000;letter-spacing:0.367px;">trăm bốn mươi tám đồng.)</div>
<div class="a nw" style="left:52.9px;top:201.0px;font:bold 15.4px 'Liberation Serif';line-height:20px;color:#000;-webkit-text-stroke:0.2px #000;letter-spacing:-0.218px;">Phương tiện thanh toán để giải ngân vốn cho vay:</div>
<div class="a nw" style="left:94.0px;top:227.0px;font:15.4px 'Liberation Serif';line-height:20px;color:#000;-webkit-text-stroke:0.2px #000;letter-spacing:-0.077px;">Bằng chuyển vào tài</div>
<div class="a nw" style="left:94.0px;top:242.5px;font:15.4px 'Liberation Serif';line-height:20px;color:#000;-webkit-text-stroke:0.2px #000;letter-spacing:0.177px;">khoản số tiền</div>
<div class="a nw" style="left:239.9px;top:227.0px;font:bold 15.4px 'Liberation Serif';line-height:20px;color:#000;-webkit-text-stroke:0.2px #000;word-spacing:3.419px;">104,321.20 USD ( Một trăm lẻ bốn ngàn, ba trăm hai mươi mốt Đô la Mỹ và hai mươi</div>
<div class="a nw" style="left:239.9px;top:245.0px;font:bold 15.4px 'Liberation Serif';line-height:20px;color:#000;-webkit-text-stroke:0.2px #000;letter-spacing:0.000px;">cents)</div>
<div class="a nw" style="left:94.0px;top:269.5px;font:15.4px 'Liberation Serif';line-height:20px;color:#000;-webkit-text-stroke:0.2px #000;letter-spacing:-0.106px;">Bằng tiền mặt số tiền</div>
<div class="a nw" style="left:94.0px;top:295.0px;font:15.4px 'Liberation Serif';line-height:20px;color:#000;-webkit-text-stroke:0.2px #000;letter-spacing:0.605px;">Khác</div>
<div class="a nw" style="left:52.9px;top:320.3px;font:bold 15.4px 'Liberation Serif';line-height:20px;color:#000;-webkit-text-stroke:0.2px #000;letter-spacing:-0.182px;">Mục đích sử dụng vốn vay:</div>
<div class="a nw" style="left:253.4px;top:320.3px;font:italic 15.4px 'Liberation Serif';line-height:20px;color:#0000ff;-webkit-text-stroke:0.2px #0000ff;letter-spacing:-0.208px;">Thanh toán LC HĐ: 071/17 - UPC</div>
<div class="a nw" style="left:52.9px;top:345.0px;font:bold 15.4px 'Liberation Serif';line-height:20px;color:#000;-webkit-text-stroke:0.2px #000;letter-spacing:-0.193px;">Thời hạn cho vay:</div>
<div class="a nw" style="left:296.5px;top:344.0px;font:15.4px 'Liberation Serif';line-height:20px;color:#0000ff;-webkit-text-stroke:0.2px #0000ff;letter-spacing:1.609px;">08</div>
<div class="a nw" style="left:373.0px;top:344.0px;font:15.4px 'Liberation Serif';line-height:20px;color:#000;-webkit-text-stroke:0.2px #000;letter-spacing:0.243px;">Tháng</div>
<div class="a nw" style="left:52.9px;top:370.0px;font:bold 15.4px 'Liberation Serif';line-height:20px;color:#000;-webkit-text-stroke:0.2px #000;letter-spacing:-0.125px;">Ngày giải ngân vốn cho vay:</div>
<div class="a nw" style="left:291.5px;top:370.0px;font:bold 15.4px 'Liberation Serif';line-height:20px;color:#000;-webkit-text-stroke:0.2px #000;letter-spacing:0.375px;">12/03/2018</div>
<div class="a nw" style="left:458.5px;top:370.0px;font:bold 15.4px 'Liberation Serif';line-height:20px;color:#000;-webkit-text-stroke:0.2px #000;letter-spacing:-0.066px;">Ngày đến hạn:</div>
<div class="a nw" style="left:578.2px;top:370.0px;font:bold 15.4px 'Liberation Serif';line-height:20px;color:#000;-webkit-text-stroke:0.2px #000;letter-spacing:0.248px;">12/11/2018</div>
<div class="a nw" style="left:52.9px;top:394.5px;font:bold 15.4px 'Liberation Serif';line-height:20px;color:#000;-webkit-text-stroke:0.2px #000;letter-spacing:-0.084px;">Lãi suất cho vay trong hạn:</div>
<div class="a nw" style="left:272.5px;top:394.0px;font:15.4px 'Liberation Serif';line-height:20px;color:#000;-webkit-text-stroke:0.2px #000;letter-spacing:0.221px;">Cố định:</div>
<div class="a nw" style="left:363.5px;top:394.0px;font:15.4px 'Liberation Serif';line-height:20px;color:#000;-webkit-text-stroke:0.2px #000;letter-spacing:0.373px;">%/năm</div>
<div class="a nw" style="left:478.5px;top:394.0px;font:15.4px 'Liberation Serif';line-height:20px;color:#000;-webkit-text-stroke:0.2px #000;letter-spacing:0.113px;">Có điều chỉnh:</div>
<div class="a nw" style="left:52.9px;top:418.3px;font:bold 15.4px 'Liberation Serif';line-height:20px;color:#000;-webkit-text-stroke:0.2px #000;letter-spacing:-0.294px;">Lãi suất áp dụng đối với dư nợ gốc bị quá hạn<span style="font-weight:normal">:</span></div>
<div class="a nw" style="left:373.0px;top:417.8px;font:15.4px 'Liberation Serif';line-height:20px;color:#000;-webkit-text-stroke:0.2px #000;letter-spacing:-0.212px;">150% Lãi suất cho vay trong hạn tại thời điểm chuyển nợ quá hạn</div>
<div class="a nw" style="left:52.9px;top:443.0px;font:bold 15.4px 'Liberation Serif';line-height:20px;color:#000;-webkit-text-stroke:0.2px #000;letter-spacing:-0.247px;">Lãi suất áp dụng đối với lãi chậm trả<span style="font-weight:normal">:</span></div>
<div class="a nw" style="left:373.0px;top:442.7px;font:15.4px 'Liberation Serif';line-height:20px;color:#000;-webkit-text-stroke:0.2px #000;letter-spacing:-0.047px;">…..%/ năm trên số dư lãi chậm trả.</div>
<div class="a nw" style="left:52.9px;top:468.7px;font:bold 15.4px 'Liberation Serif';line-height:20px;color:#000;-webkit-text-stroke:0.2px #000;letter-spacing:-0.153px;">Kỳ hạn trả nợ:</div>
<div class="a nw" style="left:240.0px;top:468.5px;font:15.4px 'Liberation Serif';line-height:20px;color:#000;-webkit-text-stroke:0.2px #000;letter-spacing:-0.094px;">Trả nợ gốc:</div>
<div class="a nw" style="left:373.0px;top:468.5px;font:15.4px 'Liberation Serif';line-height:20px;color:#000;-webkit-text-stroke:0.2px #000;letter-spacing:0.038px;">Cuối kỳ</div>
<div class="a nw" style="left:458.5px;top:468.5px;font:15.4px 'Liberation Serif';line-height:20px;color:#000;-webkit-text-stroke:0.2px #000;letter-spacing:0.038px;">Trả nợ lãi:</div>
<div class="a nw" style="left:578.2px;top:468.5px;font:15.4px 'Liberation Serif';line-height:20px;color:#000;-webkit-text-stroke:0.2px #000;letter-spacing:0.057px;">Hàng tháng</div>
<div class="a nw" style="left:52.9px;top:493.5px;font:bold 15.4px 'Liberation Serif';line-height:20px;color:#000;-webkit-text-stroke:0.2px #000;letter-spacing:-0.225px;">Chứng từ kèm theo:</div>
<div class="a nw" style="left:263.4px;top:492.8px;font:15.4px 'Liberation Serif';line-height:20px;color:#000;-webkit-text-stroke:0.2px #000;letter-spacing:0.074px;">Uỷ nhiệm chi</div>
<div class="a nw" style="left:578.2px;top:492.8px;font:15.4px 'Liberation Serif';line-height:20px;color:#000;-webkit-text-stroke:0.2px #000;letter-spacing:0.152px;">Ngày</div>
<div class="a nw" style="left:263.4px;top:517.4px;font:15.4px 'Liberation Serif';line-height:20px;color:#000;-webkit-text-stroke:0.2px #000;letter-spacing:-0.027px;">Giấy lĩnh tiền mặt</div>
<div class="a nw" style="left:578.2px;top:517.4px;font:15.4px 'Liberation Serif';line-height:20px;color:#000;-webkit-text-stroke:0.2px #000;letter-spacing:0.152px;">Ngày</div>
<div class="a nw" style="left:263.4px;top:541.6px;font:15.4px 'Liberation Serif';line-height:20px;color:#000;-webkit-text-stroke:0.2px #000;letter-spacing:-0.109px;background:#c0c0c0">Liệt kê tài liệu đính kèm khác nếu có</div>
<div class="a" style="left:78px;top:0px;width:2px;height:2px;background:#222"></div>
<div class="a" style="left:97px;top:0px;width:2px;height:2px;background:#222"></div>
<div class="a" style="left:113px;top:0px;width:2px;height:2px;background:#222"></div>
<div class="a" style="left:124px;top:0px;width:2px;height:2px;background:#222"></div>
<div class="a" style="left:152px;top:0px;width:2px;height:2px;background:#222"></div>
<div class="a" style="left:195px;top:0px;width:2px;height:2px;background:#222"></div>
<div class="a" style="left:549px;top:0px;width:2px;height:2px;background:#222"></div>
<div class="a" style="left:562px;top:0px;width:2px;height:2px;background:#222"></div>
<div class="a" style="left:31px;top:58px;width:13px;height:13px;border:1px solid #9aa6b8;background:#f0f2f6"></div>
<svg class="a" style="left:33px;top:60px" width="9" height="9" viewBox="0 0 9 9"><path d="M4.5 0.5v8M0.5 4.5h8" stroke="#3a6ad0"/><path d="M4.5 0l-2 2h4zM4.5 9l-2-2h4zM0 4.5l2-2v4zM9 4.5l-2-2v4z" fill="#3a6ad0"/></svg>
</div>
<!--/DOC-->
<div id="vscroll" class="a">
  <div class="a" style="left:4px;top:6px;width:9px;height:2px;background:#3b4a66"></div>
  <svg class="a" style="left:2px;top:12px" width="13" height="12" viewBox="0 0 13 12"><path d="M1 3.5h4l1.5-2h1.5l1 2h3v7h-2l-1.5 1h-2l-1-1h-4.5z" fill="#f3eef4" stroke="#3b4560"/><path d="M3 2l2 2 2-3" fill="none" stroke="#3b4560"/></svg>
  <div class="a" style="left:1px;top:27px;width:15px;height:490px;background:linear-gradient(90deg,#8aa6d0,#7896c4 40%,#7f9cc8)"></div>
  <svg class="a" style="left:4px;top:33px" width="9" height="5"><path d="M0 5h9l-4.5-5z" fill="#4b5a78"/></svg>
  <div class="a" style="left:2px;top:166px;width:13px;height:211px;border:1px solid #8ea8cc;border-radius:2px;background:linear-gradient(90deg,#f2f6fb,#e4ebf5 50%,#d6e0ee)"></div>
  <svg class="a" style="left:4px;top:268px" width="9" height="7"><path d="M1 .5h7M1 3h7M1 5.5h7" stroke="#8394b0"/></svg>
  <svg class="a" style="left:4px;top:507px" width="9" height="5"><path d="M0 0h9l-4.5 5z" fill="#4b5a78"/></svg>
  <svg class="a" style="left:4px;top:522px" width="8" height="6"><path d="M0 3h8l-4-3zM0 6h8l-4-3z" fill="#222"/></svg>
  <div class="a" style="left:4px;top:538px;width:8px;height:8px;border-radius:50%;background:radial-gradient(circle at 40% 35%,#e8e8e8,#8a8a8a);border:1px solid #555"></div>
  <svg class="a" style="left:4px;top:555px" width="8" height="7"><path d="M0 0h8l-4 3zM0 3h8l-4 3z" fill="#222"/></svg>
</div>
<div class="a" style="left:225px;top:146px;width:1px;height:560px;background:#555"></div>
<div class="a" style="left:219px;top:146px;width:6px;height:560px;background:linear-gradient(90deg,rgba(60,80,110,0),rgba(60,80,110,.18))"></div>
<div class="a" style="left:1127px;top:146px;width:1px;height:560px;background:#505050"></div>
<div class="a" style="left:1128px;top:146px;width:10px;height:560px;background:linear-gradient(90deg,rgba(40,55,85,.6),rgba(40,55,85,.25) 40%,rgba(40,60,90,0))"></div>
<div id="status" class="a">
  <div class="a nw" style="left:8px;top:3px;line-height:14px;color:#15287b">Page: 1 of 1</div>
  <div class="a" style="left:76px;top:2px;width:1px;height:17px;background:#a5bcdb;box-shadow:1px 0 0 #eef4fb"></div>
  <div class="a nw" style="left:86px;top:3px;line-height:14px;color:#15287b">Words: 519</div>
  <div class="a" style="left:152px;top:2px;width:1px;height:17px;background:#a5bcdb;box-shadow:1px 0 0 #eef4fb"></div>
  <div class="a nw" style="left:162px;top:3px;line-height:14px;color:#15287b">English (United States)</div>
  <div class="a" style="left:287px;top:2px;width:1px;height:17px;background:#a5bcdb;box-shadow:1px 0 0 #eef4fb"></div>
  <div class="a" style="left:1084px;top:2px;width:1px;height:17px;background:#a5bcdb;box-shadow:1px 0 0 #eef4fb"></div>
  <div class="a" style="left:1090px;top:2px;width:92px;height:18px;border:1px solid #a5bcdb;border-radius:2px;background:linear-gradient(#e8f0fa,#d5e3f4)"></div>
  <div class="a" style="left:1091px;top:3px;width:18px;height:16px;background:linear-gradient(#fde9b4,#fbd47e 50%,#f9c55a 51%,#fde39c)"></div>
  <div class="a" style="left:1109px;top:3px;width:1px;height:16px;background:#b8cbe6"></div>
  <div class="a" style="left:1127px;top:3px;width:1px;height:16px;background:#b8cbe6"></div>
  <div class="a" style="left:1145px;top:3px;width:1px;height:16px;background:#b8cbe6"></div>
  <div class="a" style="left:1163px;top:3px;width:1px;height:16px;background:#b8cbe6"></div>
  <svg class="a" style="left:1094px;top:5px" width="12" height="12"><rect x=".5" y=".5" width="11" height="11" fill="#fff" stroke="#333"/><path d="M3 3h6M3 5h6M3 7h6M3 9h6" stroke="#333"/></svg>
  <svg class="a" style="left:1112px;top:5px" width="13" height="12"><path d="M.5 1.5h5.5l.5 1 .5-1h5.5v9h-5.5l-.5 1-.5-1h-5.5z" fill="#fff" stroke="#333"/><path d="M2 4h3M2 6h3M2 8h3M8 4h3M8 6h3M8 8h3" stroke="#555"/></svg>
  <svg class="a" style="left:1130px;top:5px" width="14" height="13"><rect x=".5" y=".5" width="10" height="10" fill="#fff" stroke="#333"/><path d="M2 3h6M2 5h6M2 7h4" stroke="#333"/><circle cx="10" cy="9.5" r="3.3" fill="#2a8a3a"/><circle cx="9.5" cy="9" r="2" fill="#4aa0e0"/></svg>
  <svg class="a" style="left:1148px;top:5px" width="13" height="12"><path d="M1 2h3M4 5h8M4 8h8M1 11h3M7 2h5M7 11h5" stroke="#555" stroke-dasharray="1 1"/></svg>
  <svg class="a" style="left:1166px;top:5px" width="13" height="12"><path d="M1 1.5h11M1 4h11M1 6.5h11M1 9h11M1 11.5h11" stroke="#333"/></svg>
  <div class="a nw" style="left:1190px;top:3px;line-height:14px;color:#15287b">110%</div>
  <div class="a" style="left:1227px;top:3px;width:16px;height:16px;border-radius:50%;border:1px solid #7e94b4;background:radial-gradient(circle at 50% 30%,#fbfdff,#d8e3f1 70%,#b9cbe3)"></div>
  <div class="a" style="left:1231px;top:10px;width:8px;height:2px;background:#3b4a66"></div>
  <div class="a" style="left:1244px;top:10px;width:101px;height:1px;background:#9fb3d0;box-shadow:0 1px 0 #f4f8fc"></div>
  <svg class="a" style="left:1289px;top:4px" width="11" height="14"><path d="M.5 .5h10v8l-5 5-5-5z" fill="#f4f7fb" stroke="#6b7f9e"/><path d="M5.5 3v5" stroke="#6b7f9e"/></svg>
  <div class="a" style="left:1345px;top:3px;width:16px;height:16px;border-radius:50%;border:1px solid #7e94b4;background:radial-gradient(circle at 50% 30%,#fbfdff,#d8e3f1 70%,#b9cbe3)"></div>
  <div class="a" style="left:1349px;top:10px;width:8px;height:2px;background:#3b4a66"></div>
  <div class="a" style="left:1352px;top:7px;width:2px;height:8px;background:#3b4a66"></div>
</div>
<div id="taskbar" class="a">
  
  <div class="a" style="left:9px;top:2px;width:37px;height:37px;border-radius:50%;background:radial-gradient(circle at 50% 45%,#7ec4f0 0%,#2f86c8 35%,#1a5b9c 70%,#103e72 100%);box-shadow:0 0 0 1px #2a5a8a,0 0 3px rgba(120,200,255,.7)"></div>
  <svg class="a" style="left:15px;top:9px" width="25" height="23" viewBox="0 0 25 23"><path d="M3 3 Q7 0 11 2 L10 10 Q6 8 2 10z" fill="#f0602a"/><path d="M13 2 Q17 4 22 2 L21 10 Q16 12 12 10z" fill="#8cc83c"/><path d="M2 12 Q6 10 10 12 L9 20 Q5 18 1 20z" fill="#3aa6e8"/><path d="M12 12 Q16 14 21 12 L20 20 Q15 22 11 20z" fill="#fcc42c"/><ellipse cx="12" cy="6" rx="11" ry="4" fill="#fff" opacity=".25"/></svg>
  <svg class="a" style="left:72px;top:4px" width="36" height="34" viewBox="0 0 36 34"><defs><linearGradient id="ieg" x1="0" y1="0" x2="0.3" y2="1"><stop offset="0" stop-color="#7fd4ff"/><stop offset=".45" stop-color="#1f86d8"/><stop offset="1" stop-color="#0a3f96"/></linearGradient></defs><path d="M29.5 22.5 A11 11 0 1 1 30 17 H12" fill="none" stroke="url(#ieg)" stroke-width="5.5"/><path d="M6 29 Q2 33 10 28 L31 8 Q36 1 27 6" fill="none" stroke="#f2b21c" stroke-width="2.2"/></svg>
  <div class="a" style="left:121px;top:1px;width:59px;height:39px;border:1px solid rgba(30,45,65,.75);border-radius:3px;background:linear-gradient(#dbe5f0,#c3d3e4 45%,#b3c6db 55%,#bccee2);box-shadow:inset 0 0 0 1px rgba(255,255,255,.55)"></div>
  <svg class="a" style="left:135px;top:7px" width="32" height="29" viewBox="0 0 32 29"><path d="M1 4h9l2 2h19v22h-30z" fill="#f3d67e" stroke="#c8a048"/><rect x="4" y="1" width="10" height="5" fill="#fff"/><rect x="5" y="1.5" width="3" height="2" fill="#28b828"/><rect x="12" y="3" width="3" height="2" fill="#d03020"/><rect x="21" y="5" width="7" height="3" fill="#fff"/><rect x="22" y="5.5" width="2" height="2" fill="#3080e0"/><path d="M1 10h30v18h-30z" fill="#f8e6a8" stroke="#c8a048"/><path d="M4 21 q0-4 4-4 h16 q4 0 4 4 v7 h-6 v-4 h-12 v4 h-6z" fill="#8ad0f4" stroke="#3a8ac8"/></svg>
  <svg class="a" style="left:198px;top:7px" width="30" height="28" viewBox="0 0 30 28"><path d="M4 3h18l4 3v20l-4-2h-18z" fill="#c8e0f4" stroke="#7aa6cc"/><rect x="2" y="5" width="20" height="20" fill="#d8ecfa" stroke="#8ab4d8"/><circle cx="12" cy="15" r="7.5" fill="#f08a20"/><path d="M10 11v8l6-4z" fill="#fff"/></svg>
  <svg class="a" style="left:258px;top:5px" width="33" height="32" viewBox="0 0 33 32"><rect x="2" y="2" width="24" height="24" rx="2" fill="#fbe6b8" stroke="#f0a830"/><path d="M6 8h26v18h-26z" fill="#fff4d8" stroke="#e8b040"/><path d="M6 8l13 9 13-9" fill="none" stroke="#e0a030"/><circle cx="19" cy="20" r="9" fill="#f8c83c" stroke="#d8a020"/><path d="M14 19l5 3 6-5" fill="none" stroke="#fff" stroke-width="2"/></svg>
  <div class="a" style="left:307px;top:1px;width:59px;height:39px;border:1px solid rgba(30,45,65,.75);border-radius:3px;background:linear-gradient(#dbe5f0,#c3d3e4 45%,#b3c6db 55%,#bccee2);box-shadow:inset 0 0 0 1px rgba(255,255,255,.55)"></div>
  <svg class="a" style="left:321px;top:4px" width="32" height="32" viewBox="0 0 32 32"><circle cx="16" cy="16" r="15" fill="#dd4b39"/><path d="M16 16 L29 23.5 A15 15 0 0 1 3 23.5z" fill="#1da462"/><path d="M16 16 L3 23.5 A15 15 0 0 1 16 1z" fill="#dd4b39"/><path d="M16 16 L16 1 A15 15 0 0 1 29 23.5z" fill="#ffcd40"/><path d="M16 16 L3 23.5 A15 15 0 0 1 4 8z" fill="#dd4b39"/><path d="M16 16 L29 23.5 L19 31 A15 15 0 0 1 3 23.5z" fill="#1da462"/><circle cx="16" cy="16" r="7" fill="#fff"/><circle cx="16" cy="16" r="5.5" fill="#4a8af4"/></svg>
  <div class="a" style="left:369px;top:1px;width:59px;height:39px;border:1px solid rgba(30,45,65,.75);border-radius:3px;background:linear-gradient(#dbe5f0,#c3d3e4 45%,#b3c6db 55%,#bccee2);box-shadow:inset 0 0 0 1px rgba(255,255,255,.55)"></div>
  <svg class="a" style="left:383px;top:7px" width="32" height="28" viewBox="0 0 32 28"><path d="M2 8 L14 3 L19 15 L7 20z" fill="#b8e8a0" stroke="#8cc878"/><path d="M4 10 L16 5 L21 17 L9 22z" fill="#c8e8f8" opacity=".8"/><path d="M13 9 L27 6 L30 21 L16 24z" fill="#f8e078" stroke="#d8c050"/></svg>
  <div class="a" style="left:431px;top:1px;width:59px;height:39px;border:1px solid rgba(90,60,20,.6);border-radius:3px;background:linear-gradient(#f6ec9a,#f4d06a 45%,#f0a848 75%,#ee9a3c)"></div>
  <svg class="a" style="left:443px;top:3px" width="38" height="36" viewBox="0 0 38 36"><path d="M13 2 H22 Q34 2 34 14 V20 Q34 32 22 32 H14 Q10 32 8 33 Q5 35 4 34 Q6 31 5 28 Q2 24 2 16 Q2 2 13 2z" fill="#fff"/><path d="M13 2 Q2 2 2 16 Q2 24 5 28 Q6 31 4 34 Q8 33 10 31" fill="none" stroke="#1a73e8" stroke-width="3"/><text x="19" y="20" font-family="Liberation Sans" font-size="10" text-anchor="middle" fill="#1a73e8">Zalo</text><circle cx="27" cy="26" r="7.5" fill="#e8141c" stroke="#fff" stroke-width="1"/><text x="27" y="29.5" font-family="Liberation Sans" font-size="8.5" font-weight="bold" text-anchor="middle" fill="#fff">5+</text></svg>
  <div class="a" style="left:493px;top:1px;width:59px;height:39px;border:1px solid rgba(30,45,65,.75);border-radius:3px;background:linear-gradient(#dbe5f0,#c3d3e4 45%,#b3c6db 55%,#bccee2);box-shadow:inset 0 0 0 1px rgba(255,255,255,.55)"></div>
  <svg class="a" style="left:507px;top:5px" width="32" height="31" viewBox="0 0 32 31"><path d="M7 3 L22 1 L26 5 L26 28 L7 26z" fill="#fff" stroke="#9aaccc"/><path d="M12 9h11M12 13h11M12 17h11M12 21h11" stroke="#1f4d9a" stroke-width="1.6"/><path d="M3 6 L15 4 L15 26 L3 24z" fill="#2b5fb0"/><path d="M3 6 L15 4 L15 12 L3 13z" fill="#5b8ad0"/><text x="9" y="19" font-family="Liberation Serif" font-size="11" font-weight="bold" font-style="italic" text-anchor="middle" fill="#fff">W</text></svg>
  <div class="a nw" style="left:1157px;top:10px;font-size:12px;line-height:14px;color:#fff">EN</div>
  <svg class="a" style="left:1187px;top:13px" width="10" height="6"><path d="M0 6h10l-5-5z" fill="#fff"/></svg>
  <svg class="a" style="left:1208px;top:8px" width="18" height="18" viewBox="0 0 18 18"><path d="M2 1v16" stroke="#fff" stroke-width="1.6"/><path d="M3 2 h7 l1 1 h4 v7 h-5 l-1-1 h-6z" fill="#f4f4f4" stroke="#aab"/><circle cx="12.5" cy="12.5" r="4.5" fill="#e03030" stroke="#fff"/><path d="M10.5 10.5l4 4M14.5 10.5l-4 4" stroke="#fff" stroke-width="1.3"/></svg>
  <svg class="a" style="left:1232px;top:8px" width="18" height="18" viewBox="0 0 18 18"><path d="M2 1v5h4v-5M4 6v8" fill="none" stroke="#fff" stroke-width="1.4"/><rect x="6.5" y="4.5" width="10" height="8" fill="#7a8aa0" stroke="#fff"/><path d="M11 13v2M8 16h6" stroke="#fff" stroke-width="1.4"/></svg>
  <svg class="a" style="left:1256px;top:8px" width="18" height="18" viewBox="0 0 18 18"><path d="M1 6h3l5-4v13l-5-4h-3z" fill="#f4f4f4" stroke="#99a"/><circle cx="12.5" cy="12.5" r="4.5" fill="#e03030" stroke="#fff"/><path d="M10.5 10.5l4 4M14.5 10.5l-4 4" stroke="#fff" stroke-width="1.3"/></svg>
  <div class="a nw" style="left:1293px;top:5px;font-size:12px;line-height:14px;color:#fff">7:59 AM</div>
  <div class="a nw" style="left:1287px;top:22px;font-size:12px;line-height:14px;color:#fff">12/11/2019</div>
  <div class="a" style="left:1352px;top:0;width:14px;height:40px;border-left:1px solid #5a6a7e;background:linear-gradient(90deg,#8898ac,#6f8096);box-shadow:inset 1px 0 0 rgba(255,255,255,.35)"></div>
</div>
</body></html>
